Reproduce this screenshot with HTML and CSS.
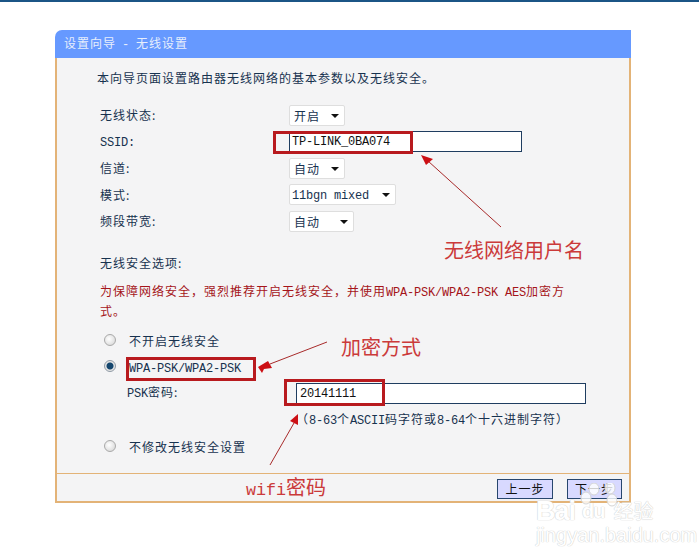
FILE: index.html
```html
<!DOCTYPE html>
<html lang="zh-CN">
<head>
  <meta charset="UTF-8">
  <meta name="viewport" content="width=device-width, initial-scale=1.0">
  <title>设置向导 - 无线设置</title>
  <link rel="stylesheet" href="styles.css">
</head>
<body>
  <div class="topbar"></div>

  <div class="panel">
    <div class="panel-title">设置向导<span class="lat dash">-</span>无线设置</div>

    <div class="panel-body">
      <p class="intro">本向导页面设置路由器无线网络的基本参数以及无线安全。</p>

      <div class="rows">
        <div class="row"><span class="label">无线状态:</span><span class="select s-short">开启</span></div>
        <div class="row"><span class="label lat ssid-label">SSID:</span><span class="input i-ssid lat">TP-LINK_0BA074</span></div>
        <div class="row"><span class="label">信道:</span><span class="select s-short">自动</span></div>
        <div class="row"><span class="label">模式:</span><span class="select s-long lat">11bgn mixed</span></div>
        <div class="row"><span class="label">频段带宽:</span><span class="select s-mid">自动</span></div>
      </div>

      <p class="sec-title">无线安全选项:</p>
      <p class="warn">为保障网络安全&#xFF0C;强烈推荐开启无线安全&#xFF0C;并使用<span class="lat">WPA-PSK/WPA2-PSK AES</span>加密方<br>式。</p>

      <div class="radio-row"><span class="radio"></span>不开启无线安全</div>
      <div class="radio-row"><span class="radio checked"></span><span class="lat wpa-label">WPA-PSK/WPA2-PSK</span></div>
      <div class="psk-row"><span class="psk-label"><span class="lat">PSK</span>密码:</span><span class="input i-psk lat">20141111</span></div>
      <p class="hint">&#xFF08;<span class="lat">8-63</span>个<span class="lat">ASCII</span>码字符或<span class="lat">8-64</span>个十六进制字符&#xFF09;</p>
      <div class="radio-row last"><span class="radio"></span>不修改无线安全设置</div>
    </div>

    <div class="panel-foot">
      <span class="btn">上一步</span>
      <span class="btn">下一步</span>
    </div>
  </div>

  <!-- annotations drawn on top of the screenshot -->
  <svg class="marks" width="699" height="557" viewBox="0 0 699 557">
    <g fill="none" stroke="#b81a1e" stroke-width="3">
      <rect x="274.5" y="132.5" width="137" height="20"/>
      <rect x="127.5" y="358.5" width="127" height="21"/>
      <rect x="285.5" y="380.5" width="98" height="24"/>
    </g>
    <g stroke="#a82a2a" stroke-width="1" fill="none">
      <path d="M501 227L428 161"/>
      <path d="M327 342L270 364"/>
      <path d="M270 465L294 423"/>
    </g>
    <g fill="#cc0f14">
      <path d="M421 155L433 159L426 165Z"/>
      <path d="M258 367L268 361L272 368L264 369L262 373Z"/>
      <path d="M298 414L298 425L290 421Z"/>
    </g>
  </svg>

  <span class="note note-ssid">无线网络用户名</span>
  <span class="note note-enc">加密方式</span>
  <span class="note note-pwd"><span class="note-lat">wifi</span>密码</span>

  <div class="watermark">
    <svg class="wm-paw" width="40" height="42" viewBox="0 0 40 42">
      <g fill="#fff" fill-opacity="0.8" stroke="#d4d4d4">
        <ellipse cx="9" cy="15" rx="5" ry="6"/>
        <ellipse cx="17" cy="6" rx="5" ry="6"/>
        <ellipse cx="33" cy="5" rx="5" ry="6"/>
        <ellipse cx="35" cy="17" rx="5" ry="6"/>
      </g>
    </svg>
    <div class="wm-logo">Bai<span class="wm-du">du</span><span class="wm-cn">经验</span></div>
    <div class="wm-url">jingyan.baidu.com</div>
  </div>
</body>
</html>
```

FILE: styles.css
```css
body {
  margin: 0;
  background: #fff;
  color: #17324f;
  font-family: "Noto Sans CJK SC", sans-serif;
  font-size: 12px;
  letter-spacing: 1px;
  line-height: 20px;
  overflow: hidden;
}

p {
  margin: 0;
}

.lat {
  font-family: "Liberation Mono", monospace;
  letter-spacing: -0.2px;
}

p .lat {
  line-height: 1;
}

.topbar {
  height: 2px;
  background: #1b5586;
}

.panel {
  width: 576px;
  margin: 28px 0 0 55px;
}

.panel-title {
  height: 28px;
  padding-left: 9px;
  line-height: 26px;
  background: #6699ff;
  color: #e6eefc;
  border-top-left-radius: 7px;
}

.dash {
  margin: 0 7px 0 6px;
}

.panel-body {
  height: 405px;
  padding: 10px 0 0 43px;
  background: #f4f4f5;
  border: 2px solid #e3b377;
  border-width: 0 2px 1px;
}

.intro {
  margin-left: -3px;
}

.rows {
  margin-top: 14px;
}

.row {
  display: grid;
  grid-template-columns: 189px auto;
  justify-content: start;
  align-items: center;
  height: 26.5px;
}

.ssid-label {
  padding-top: 3px;
}

.select {
  position: relative;
  height: 21px;
  padding-left: 4px;
  box-sizing: border-box;
  line-height: 19px;
  background: #fff;
  border: 1px solid #dedede;
  border-radius: 2px;
}

.select::after {
  content: "";
  position: absolute;
  right: 5px;
  top: 8px;
  border: 4px solid transparent;
  border-top: 4px solid #111;
  border-bottom: 0;
}

.s-short {
  width: 56px;
}

.s-mid {
  width: 65px;
}

.s-long {
  width: 107px;
  padding-left: 2px;
  line-height: 23px;
}

.input {
  height: 21px;
  padding-left: 2px;
  box-sizing: border-box;
  line-height: 20px;
  color: #111;
  background: #fff;
  border: 1px solid #1f3d60;
}

.i-ssid {
  width: 233px;
}

.i-psk {
  width: 290px;
  padding-left: 3px;
}

.sec-title {
  margin-top: 18.5px;
}

.warn {
  margin-top: 8px;
  color: #a5141a;
}

.radio-row {
  display: flex;
  align-items: center;
  height: 26px;
}

.warn + .radio-row {
  margin-top: 7px;
}

.radio-row.last {
  margin-top: 5px;
}

.wpa-label {
  padding-top: 4px;
}

.radio {
  width: 12px;
  height: 12px;
  margin: -2px 13px 0 4px;
  box-sizing: border-box;
  border: 1px solid #a9a9a9;
  border-radius: 50%;
  background: radial-gradient(circle at 40% 40%, #fff, #d2d2d2);
}

.radio.checked {
  border-color: #8f9aa5;
  background: radial-gradient(circle, #14466e 0 3px, #e6e6e6 4px);
}

.psk-row {
  display: flex;
  align-items: center;
  height: 26px;
  padding-left: 27px;
}

.psk-label {
  width: 169px;
}

.hint {
  margin: 3px 0 0 196px;
  white-space: nowrap;
}

.panel-foot {
  display: flex;
  justify-content: flex-end;
  gap: 14px;
  height: 22px;
  padding: 5px 7px 0 0;
  background: #f4f4f5;
  border: 2px solid #e3b377;
  border-top: 0;
}

.btn {
  width: 56px;
  height: 20px;
  box-sizing: border-box;
  text-align: center;
  line-height: 17px;
  color: #111;
  background: #d8d9ff;
  border: 1px solid #27466e;
}

.btn + .btn {
  width: 55px;
}

.marks {
  position: absolute;
  left: 0;
  top: 0;
}

.note {
  position: absolute;
  font-size: 20px;
  line-height: 24px;
  letter-spacing: 0;
  color: #cb3a3a;
  white-space: nowrap;
}

.note-ssid {
  left: 444px;
  top: 238px;
}

.note-enc {
  left: 341px;
  top: 335px;
}

.note-pwd {
  left: 246px;
  top: 475px;
}

.note-lat {
  font-family: "Liberation Mono", monospace;
  font-size: 16.7px;
}

.watermark {
  position: absolute;
  left: 536px;
  top: 497px;
  color: #fff;
  letter-spacing: 0;
  text-shadow: 0 0 1px #ccc, 0 0 1px #ccc;
}

.wm-paw {
  position: absolute;
  left: 41px;
  top: -14px;
}

.wm-logo {
  display: flex;
  align-items: center;
  height: 28px;
  font-family: "Liberation Sans", sans-serif;
  font-size: 27px;
  font-weight: bold;
  letter-spacing: -1px;
}

.wm-du {
  margin-left: 7px;
  font-size: 20px;
}

.wm-cn {
  margin-left: 9px;
  font-family: "Noto Sans CJK SC", sans-serif;
  font-size: 20px;
  font-weight: normal;
  letter-spacing: 0;
}

.wm-url {
  font-family: "Liberation Sans", sans-serif;
  font-size: 20px;
  line-height: 20px;
  white-space: nowrap;
}
```
